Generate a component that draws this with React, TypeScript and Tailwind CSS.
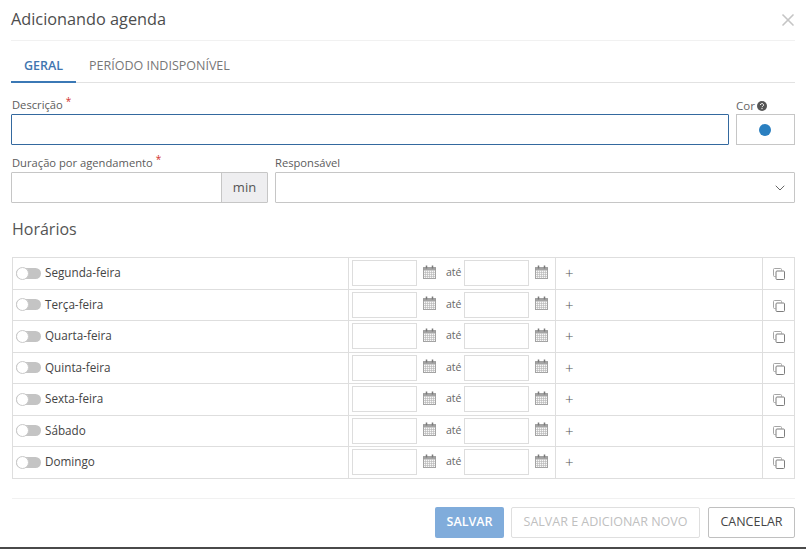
import React from "react";
import { ChevronDown, X } from "lucide-react";

const days = ["Segunda-feira", "Terça-feira", "Quarta-feira", "Quinta-feira", "Sexta-feira", "Sábado", "Domingo"];

function CalendarIcon() {
  return (
    <svg width="13" height="14" viewBox="0 0 13 14" fill="none" stroke="#a2a2a2" strokeWidth="1" className="mt-[-3px] shrink-0">
      <rect x="0.5" y="2.5" width="12" height="11" fill="#f8f8f8" />
      <path d="M0.5 5.5h12M0.5 7.5h12M0.5 9.5h12M0.5 11.5h12M2.5 5.5v8M4.5 5.5v8M6.5 5.5v8M8.5 5.5v8M10.5 5.5v8" stroke="#b4b4b4" strokeWidth="0.6" />
      <path d="M0.5 3.5h12M0.5 4.5h12" stroke="#8e8e8e" strokeWidth="0.8" />
      <path d="M3.5 0.5v3M9.5 0.5v3" stroke="#7a7a7a" strokeWidth="1.5" />
    </svg>
  );
}

function CopyIcon() {
  return (
    <svg width="12" height="12" viewBox="0 0 12 12" fill="none" stroke="#7d7d7d" strokeWidth="1">
      <path d="M2.5 8.5h-1a1 1 0 0 1-1-1v-6a1 1 0 0 1 1-1h6a1 1 0 0 1 1 1v1" stroke="#a5a5a5" />
      <rect x="3" y="3" width="8.5" height="8.5" rx="1" />
    </svg>
  );
}

function Switch() {
  return (
    <span className="relative block h-[11px] w-[25px] rounded-full bg-[#c4c4c4]">
      <span className="absolute left-0 top-[-1px] h-[13px] w-[13px] rounded-full border border-[#c9c9c9] bg-white" />
    </span>
  );
}

function TimeRange() {
  return (
    <div className="flex flex-1 items-center pl-[3px]">
      <div className="h-[26px] w-[65px] border border-[#dddddd]" />
      <div className="ml-[6px] w-[13px]"><CalendarIcon /></div>
      <span className="ml-[10px] w-[18px] text-[10.5px] text-[#666]">até</span>
      <div className="h-[26px] w-[65px] border border-[#dddddd]" />
      <div className="ml-[6px] w-[13px]"><CalendarIcon /></div>
    </div>
  );
}

function DayRow({ name }: { name: string }) {
  return (
    <div className="flex h-[31.5px] border-b border-[#dedede] text-[11.7px] text-[#444]">
      <div className="flex w-[336px] items-center gap-[4px] border-r border-[#dedede] pl-[3px]">
        <Switch />
        <span>{name}</span>
      </div>
      <div className="flex w-[207px] border-r border-[#dedede]">
        <TimeRange />
      </div>
      <div className="flex flex-1 items-center border-r border-[#dedede] pl-[9px] text-[15px] font-light text-[#555]">+</div>
      <div className="flex w-[31px] items-center justify-center pt-[2px]"><CopyIcon /></div>
    </div>
  );
}

export default function App() {
  return (
    <div className="flex h-[549px] w-[806px] flex-col overflow-hidden bg-white font-['Open_Sans',sans-serif]">
      <div className="flex flex-1 flex-col px-[11px]">
        <header className="flex h-[41px] items-center justify-between border-b border-[#f1f1f1] pb-[2px]">
          <h1 className="text-[16.3px] text-[#4d4d4d]">Adicionando agenda</h1>
          <X size={20} strokeWidth={2} className="mr-[-3px] mt-[1px] text-[#c5c5c5]" />
        </header>

        <nav className="flex h-[42px] border-b border-[#e2e2e2] text-[12.5px]">
          <div className="flex h-[42px] w-[65px] items-center justify-center border-b-2 border-[#3b78b5] pt-[10px] font-semibold text-[#3f75b0]">GERAL</div>
          <div className="ml-[13px] flex items-center pt-[9px] text-[#777]">PERÍODO INDISPONÍVEL</div>
        </nav>

        <section className="mt-[14px] flex gap-[7px]">
          <div className="flex-1">
            <label className="flex h-[17px] pl-px text-[11.2px] font-medium leading-[16px] text-[#5c5c5c]">
              Descrição<span className="ml-[3px] text-[10px] leading-[8px] text-[#d2322d]">*</span>
            </label>
            <div className="h-[31px] rounded-[1px] border border-[#34699f]" />
          </div>
          <div className="w-[59px]">
            <label className="flex h-[17px] items-center gap-[2px] text-[11.5px] text-[#666]">
              Cor
              <svg width="10" height="10" viewBox="0 0 10 10">
                <circle cx="5" cy="5" r="5" fill="#555" />
                <path d="M3.4 4a1.6 1.4 0 1 1 2.4 1.2c-.6.3-.8.5-.8 1" stroke="#fff" strokeWidth="1" fill="none" />
                <circle cx="5" cy="7.6" r=".7" fill="#fff" />
              </svg>
            </label>
            <div className="flex h-[31px] items-center justify-center border border-[#c6c6c6] pr-px">
              <span className="h-[12px] w-[12px] rounded-full bg-[#2a7fc0]" />
            </div>
          </div>
        </section>

        <section className="mt-[10px] flex gap-[7px]">
          <div className="w-[257px]">
            <label className="flex h-[17px] pl-px text-[11.2px] font-medium leading-[16px] text-[#5c5c5c]">
              Duração por agendamento<span className="ml-[3px] text-[10px] leading-[8px] text-[#d2322d]">*</span>
            </label>
            <div className="flex h-[31px] rounded-[1px] border border-[#c6c6c6]">
              <div className="flex-1" />
              <div className="flex w-[46px] items-center justify-center border-l border-[#c6c6c6] bg-[#eeeef0] text-[13px] text-[#555]">min</div>
            </div>
          </div>
          <div className="flex-1">
            <label className="flex h-[17px] text-[11.2px] font-medium leading-[16px] text-[#5c5c5c]">Responsável</label>
            <div className="flex h-[31px] items-center justify-end rounded-[1px] border border-[#c6c6c6] pr-[6px]">
              <ChevronDown size={16} strokeWidth={1.5} className="text-[#666]" />
            </div>
          </div>
        </section>

        <h2 className="ml-px mt-[15px] text-[16px] leading-[22px] text-[#555]">Horários</h2>

        <div className="ml-px mt-[17px] border-x border-t border-[#dedede]">
          {days.map((d) => (
            <DayRow key={d} name={d} />
          ))}
        </div>

        <footer className="ml-px mt-[19px] flex items-center justify-end gap-[7px] border-t border-[#f1f1f1] pt-[8px] text-[12.5px]">
          <button className="h-[31px] w-[69px] rounded-[2px] bg-[#80acdb] font-semibold text-white">SALVAR</button>
          <button className="h-[31px] w-[189px] rounded-[2px] border border-[#dfdfdf] text-[#c0c0c0]">SALVAR E ADICIONAR NOVO</button>
          <button className="ml-px h-[31px] w-[87px] rounded-[2px] border border-[#c0c0c0] text-[#444]">CANCELAR</button>
        </footer>
      </div>
      <div className="h-[2px] bg-[#4a4a4a]" />
    </div>
  );
}
